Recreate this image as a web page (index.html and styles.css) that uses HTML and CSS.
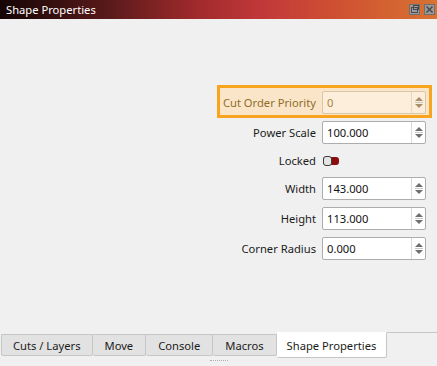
FILE: index.html
```html
<!DOCTYPE html>
<html lang="en">
<head>
    <meta charset="UTF-8">
    <title>Shape Properties</title>
    <link rel="stylesheet" href="styles.css">
</head>
<body>
    <div class="titlebar">
        <span class="title">Shape Properties</span>
        <div class="title-buttons">
            <svg class="tbtn" width="11" height="11" viewBox="0 0 11 11">
                <rect x="0.5" y="0.5" width="10" height="10" fill="#9a9a9a" stroke="#6f6f6f"/>
                <rect x="2.5" y="3.5" width="6" height="5" fill="none" stroke="#4a4a4a"/>
                <rect x="4.5" y="1.5" width="5" height="4" fill="none" stroke="#4a4a4a"/>
            </svg>
            <svg class="tbtn" width="11" height="11" viewBox="0 0 11 11">
                <rect x="0.5" y="0.5" width="10" height="10" fill="#9a9a9a" stroke="#6f6f6f"/>
                <path d="M2.5 2.5 L8.5 8.5 M8.5 2.5 L2.5 8.5" stroke="#4a4a4a" stroke-width="1.6"/>
            </svg>
        </div>
    </div>

    <div class="main">
        <div class="form">
            <div class="row highlight">
                <label>Cut Order Priority</label>
                <div class="spin disabled">
                    <span class="value">0</span>
                    <span class="arrows"><i class="up"></i><i class="sep"></i><i class="down"></i></span>
                </div>
            </div>
            <div class="row">
                <label>Power Scale</label>
                <div class="spin">
                    <span class="value">100.000</span>
                    <span class="arrows"><i class="up"></i><i class="sep"></i><i class="down"></i></span>
                </div>
            </div>
            <div class="row short">
                <label>Locked</label>
                <div class="control"><span class="toggle"></span></div>
            </div>
            <div class="row">
                <label>Width</label>
                <div class="spin">
                    <span class="value">143.000</span>
                    <span class="arrows"><i class="up"></i><i class="sep"></i><i class="down"></i></span>
                </div>
            </div>
            <div class="row">
                <label>Height</label>
                <div class="spin">
                    <span class="value">113.000</span>
                    <span class="arrows"><i class="up"></i><i class="sep"></i><i class="down"></i></span>
                </div>
            </div>
            <div class="row">
                <label>Corner Radius</label>
                <div class="spin">
                    <span class="value">0.000</span>
                    <span class="arrows"><i class="up"></i><i class="sep"></i><i class="down"></i></span>
                </div>
            </div>
        </div>
    </div>

    <div class="tabbar">
        <div class="tab">Cuts / Layers</div>
        <div class="tab">Move</div>
        <div class="tab">Console</div>
        <div class="tab">Macros</div>
        <div class="tab active">Shape Properties</div>
        <div class="tab-rest"></div>
    </div>
    <div class="grip"></div>
</body>
</html>
```

FILE: styles.css
```css
body {
    margin: 0;
    width: 437px;
    height: 366px;
    display: flex;
    flex-direction: column;
    background: #f0f0f0;
    color: #1b1b1b;
    font-family: "Noto Sans", sans-serif;
    font-size: 11.2px;
    overflow: hidden;
}

.titlebar {
    height: 19px;
    display: flex;
    align-items: center;
    justify-content: space-between;
    padding: 0 2px 0 6px;
    background: linear-gradient(to right, #150505 0%, #5a1a1a 25%, #a02a2c 45%, #c2383a 60%, #cf5232 78%, #d97232 100%);
}

.title {
    color: #fff;
}

.title-buttons {
    display: flex;
    gap: 4px;
}

.tbtn {
    display: block;
}

.main {
    flex: 1;
}

.form {
    display: flex;
    flex-direction: column;
    align-items: flex-end;
    padding: 72px 11px 0 0;
}

.row {
    display: flex;
    align-items: center;
    gap: 6px;
    height: 23px;
    margin-bottom: 7px;
}

.row.short {
    height: 19px;
}

.row.highlight {
    border: 3px solid #f9a41e;
    background: #fbe5c9;
    padding: 3px 3px 1px 3px;
    margin: -6px -6px 3px -6px;
}

.row.highlight label {
    color: #8e6d2a;
}

.control {
    width: 104px;
}

.spin {
    box-sizing: border-box;
    width: 104px;
    height: 23px;
    display: flex;
    align-items: center;
    background: #fff;
    border: 1px solid #adadad;
    border-radius: 2px;
}

.spin .value {
    flex: 1;
    padding-left: 4px;
    color: #111;
}

.spin .arrows {
    width: 13px;
    height: 100%;
    border-left: 1px solid #dadada;
    display: flex;
    flex-direction: column;
    align-items: center;
    justify-content: center;
    gap: 1px;
}

.arrows i {
    display: block;
}

.arrows .up {
    width: 0;
    height: 0;
    border-left: 4px solid transparent;
    border-right: 4px solid transparent;
    border-bottom: 4px solid #6e6e6e;
}

.arrows .down {
    width: 0;
    height: 0;
    border-left: 4px solid transparent;
    border-right: 4px solid transparent;
    border-top: 4px solid #6e6e6e;
}

.arrows .sep {
    width: 8px;
    height: 1px;
    background: #c8c8c8;
}

.spin.disabled {
    background: #fdeedc;
    border-color: #d8c6a8;
}

.spin.disabled .value {
    color: #a88440;
}

.spin.disabled .arrows {
    border-left-color: #e6d6bc;
}

.spin.disabled .arrows .up {
    border-bottom-color: #a8906a;
}

.spin.disabled .arrows .down {
    border-top-color: #a8906a;
}

.toggle {
    display: block;
    position: relative;
    width: 16px;
    height: 8px;
    margin-left: 1px;
    background: #8a0c0c;
    border-radius: 3px;
}

.toggle::before {
    content: "";
    position: absolute;
    left: 0;
    top: -1px;
    width: 7px;
    height: 8px;
    border: 1px solid #3c3c3c;
    border-radius: 3px;
    background: #e4e4e4;
}

.tabbar {
    height: 26px;
    display: flex;
    align-items: flex-start;
    padding-left: 1px;
}

.tab {
    margin-top: 2px;
    height: 20px;
    padding: 0 12px;
    display: flex;
    align-items: center;
    background: #e2e2e2;
    border: 1px solid #c6c6c6;
    border-left: none;
    border-radius: 0 0 2px 2px;
}

.tab:first-child {
    padding: 0 11px;
    border-left: 1px solid #c6c6c6;
}

.tab.active {
    margin-top: 0;
    height: 24px;
    padding: 0 10px;
    background: #fff;
    border-top-color: #fff;
}

.tab-rest {
    flex: 1;
    height: 25px;
    border-top: 1px solid #c6c6c6;
}

.grip {
    width: 18px;
    height: 5px;
    margin: 2px auto 0;
    border-top: 1px dotted #b0b0b0;
}
```
